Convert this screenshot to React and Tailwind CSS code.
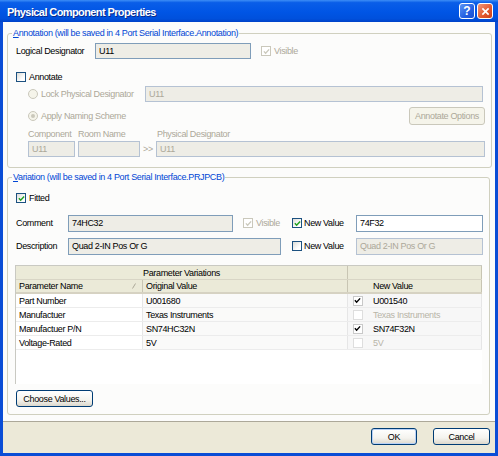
import React from "react";

function Check({ kind = "xp", checked = false }) {
  if (kind === "xp") {
    return (
      <span className="w-[10px] h-[10px] shrink-0 border border-[#1C5180] bg-[linear-gradient(135deg,#DCDCD7,#FFFFFF_70%)] flex items-center justify-center">
        {checked && (
          <svg viewBox="0 0 8 8" className="w-[7px] h-[7px]">
            <path d="M1 3.8 L3 6 L7 1.6" stroke="#21A121" strokeWidth="1.7" fill="none" />
          </svg>
        )}
      </span>
    );
  }
  if (kind === "disabled") {
    return (
      <span className="w-[10px] h-[10px] shrink-0 border border-[#CAC8BB] bg-white flex items-center justify-center">
        {checked && (
          <svg viewBox="0 0 8 8" className="w-[7px] h-[7px]">
            <path d="M1 3.8 L3 6 L7 1.6" stroke="#CAC8BB" strokeWidth="1.5" fill="none" />
          </svg>
        )}
      </span>
    );
  }
  if (kind === "grid") {
    return (
      <span className="w-[10px] h-[10px] shrink-0 border border-[#C9C9C9] bg-white flex items-center justify-center">
        {checked && (
          <svg viewBox="0 0 8 8" className="w-[7px] h-[7px]">
            <path d="M1 3.8 L3 6 L7 1.6" stroke="#000000" strokeWidth="1.6" fill="none" />
          </svg>
        )}
      </span>
    );
  }
  return (
    <span className="w-[10px] h-[10px] shrink-0 border border-[#DEDEDE] bg-white" />
  );
}

function Radio({ selected }) {
  return (
    <span className="w-[10px] h-[10px] shrink-0 rounded-full border border-[#CAC8BB] bg-[#F5F4EA] flex items-center justify-center">
      {selected && <span className="w-[4px] h-[4px] rounded-full bg-[#CAC8BB]" />}
    </span>
  );
}

function XPButton({ className, children, isDefault }) {
  return (
    <div
      className={
        "h-[17px] rounded-[3px] border border-[#003C74] bg-[linear-gradient(to_bottom,#FFFFFF,#F4F3EE_60%,#DCD8CC)] flex items-center justify-center text-black " +
        (isDefault ? "shadow-[inset_0_0_0_1px_#B9D1F6] " : "") +
        className
      }
    >
      {children}
    </div>
  );
}

export default function App() {
  return (
    <div className="w-[498px] h-[456px] flex flex-col font-['Liberation_Sans',Arial,sans-serif] text-[9px] tracking-[-0.35px] text-black leading-[12px] overflow-hidden">
      {/* Title bar */}
      <div className="h-[22px] shrink-0 flex items-center pl-[7px] pr-[5px] bg-[linear-gradient(to_bottom,#3D8EF6,#0A5EE8_12%,#0055E5_55%,#0050DC_85%,#0042C8)]">
        <span className="text-white font-bold text-[11px] tracking-[-0.6px] pt-[1px] flex-1 [text-shadow:1px_1px_0_#0A2A8A]">
          Physical Component Properties
        </span>
        <div className="flex gap-[2px] items-center">
          <div className="w-[16px] h-[16px] rounded-[3px] border border-white bg-[linear-gradient(135deg,#5E95F5,#2360E2_60%,#1A4FD0)] flex items-center justify-center text-white font-bold text-[12px] tracking-normal leading-none">
            ?
          </div>
          <div className="w-[16px] h-[16px] rounded-[3px] border border-white bg-[linear-gradient(135deg,#F0977A,#E2572D_60%,#C8401C)] flex items-center justify-center">
            <svg viewBox="0 0 10 10" className="w-[9px] h-[9px]">
              <path d="M1.5 1.5 L8.5 8.5 M8.5 1.5 L1.5 8.5" stroke="white" strokeWidth="1.8" />
            </svg>
          </div>
        </div>
      </div>

      {/* Frame */}
      <div className="flex-1 flex flex-col border-x-[3px] border-b-[3px] border-[#0A4DD6]">
        {/* White panel */}
        <div className="flex-1 bg-[#FCFCFB] flex flex-col pl-[4px] pr-[5px]">
          {/* Annotation */}
          <fieldset className="mt-[5px] border border-[#D0D0BF] rounded-[3px] pl-[4px] pr-[6px] pb-[10px]">
            <legend className="px-[1px] text-[#0046D5] leading-[12px]">
              <span className="underline">A</span>nnotation (will be saved in 4 Port Serial Interface.Annotation)
            </legend>
            <div className="pl-[4px] flex flex-col">
              <div className="mt-[3px] h-[18px] flex items-center">
                <span className="w-[79px]">Logical Designator</span>
                <div className="w-[156px] h-[16px] border border-[#7F9DB9] bg-[#EEEDE6] px-[3px] flex items-center">U11</div>
                <span className="ml-[10px] flex items-center gap-[3px] text-[#ACA899]">
                  <Check kind="disabled" checked />
                  Visible
                </span>
              </div>
              <div className="mt-[10px] h-[14px] flex items-center gap-[3px]">
                <Check kind="xp" />
                <span>Annotate</span>
              </div>
              <div className="mt-[2px] h-[16px] flex items-center">
                <div className="w-[129px] pl-[12px] flex items-center gap-[3px] text-[#ACA899]">
                  <Radio />
                  <span>Lock Physical Designator</span>
                </div>
                <div className="w-[338px] h-[16px] border border-[#B5C2D3] bg-[#EEEDE6] px-[3px] flex items-center text-[#ACA899]">U11</div>
              </div>
              <div className="mt-[5px] h-[18px] flex items-center">
                <div className="flex-1 pl-[12px] flex items-center gap-[3px] text-[#ACA899]">
                  <Radio selected />
                  <span>Apply Naming Scheme</span>
                </div>
                <div className="w-[76px] h-[18px] rounded-[3px] border border-[#CAC8BB] bg-[#F5F4EA] flex items-center justify-center text-[#ACA899]">
                  Annotate Options
                </div>
              </div>
              <div className="mt-[3px] h-[12px] flex items-center pl-[12px] text-[#ACA899]">
                <span className="w-[50px]">Component</span>
                <span className="w-[79px]">Room Name</span>
                <span>Physical Designator</span>
              </div>
              <div className="mt-[1px] h-[16px] flex items-center pl-[12px]">
                <div className="w-[47px] h-[16px] border border-[#B5C2D3] bg-[#EEEDE6] px-[3px] flex items-center text-[#ACA899]">U11</div>
                <div className="ml-[3px] w-[62px] h-[16px] border border-[#B5C2D3] bg-[#EEEDE6]" />
                <span className="w-[16px] text-center text-[#ACA899]">&gt;&gt;</span>
                <div className="w-[329px] h-[16px] border border-[#B5C2D3] bg-[#EEEDE6] px-[3px] flex items-center text-[#ACA899]">U11</div>
              </div>
            </div>
          </fieldset>

          {/* Variation */}
          <fieldset className="mt-[3px] border border-[#D0D0BF] rounded-[3px] pl-[4px] pr-[6px] pb-[7px]">
            <legend className="px-[1px] text-[#0046D5] leading-[12px]">
              <span className="underline">V</span>ariation (will be saved in 4 Port Serial Interface.PRJPCB)
            </legend>
            <div className="pl-[4px] flex flex-col">
              <div className="mt-[8px] h-[14px] flex items-center gap-[3px]">
                <Check kind="xp" checked />
                <span>Fitted</span>
              </div>
              <div className="mt-[9px] h-[18px] flex items-center">
                <span className="w-[52px]">Comment</span>
                <div className="w-[165px] h-[17px] border border-[#7F9DB9] bg-[#EEEDE6] px-[3px] flex items-center">74HC32</div>
                <span className="ml-[10px] w-[49px] flex items-center gap-[3px] text-[#ACA899]">
                  <Check kind="disabled" checked />
                  Visible
                </span>
                <span className="w-[64px] flex items-center gap-[2px]">
                  <Check kind="xp" checked />
                  New Value
                </span>
                <div className="w-[127px] h-[17px] border border-[#7F9DB9] bg-white px-[3px] flex items-center">74F32</div>
              </div>
              <div className="mt-[5px] h-[18px] flex items-center">
                <span className="w-[52px]">Description</span>
                <div className="w-[213px] h-[17px] border border-[#7F9DB9] bg-[#EEEDE6] px-[3px] flex items-center">Quad 2-IN Pos Or G</div>
                <span className="ml-[11px] w-[64px] flex items-center gap-[2px]">
                  <Check kind="xp" />
                  New Value
                </span>
                <div className="w-[127px] h-[17px] border border-[#B5C2D3] bg-[#EEEDE6] px-[3px] flex items-center text-[#ACA899]">Quad 2-IN Pos Or G</div>
              </div>

              {/* Table */}
              <div className="mt-[10px] -ml-[1px] w-[467px] h-[119px] border-l border-t border-[#C9C9C2] bg-white flex flex-col">
                <div className="h-[14px] flex bg-[#EBEAD8] border-b border-[#D8D5C5]">
                  <div className="w-[332px] border-r border-[#C8C5B3] flex items-center justify-center">Parameter Variations</div>
                  <div className="flex-1 border-r border-[#C8C5B3]" />
                </div>
                <div className="h-[14px] flex bg-[#EBEAD8] border-b-2 border-[#D6D2C2]">
                  <div className="w-[127px] border-r border-[#C8C5B3] flex items-center pl-[3px] pr-[6px]">
                    <span className="flex-1">Parameter Name</span>
                    <svg viewBox="0 0 4 6" className="w-[4px] h-[6px]">
                      <path d="M0.5 5.5 L3.5 0.5" stroke="#ACA899" strokeWidth="1" />
                    </svg>
                  </div>
                  <div className="w-[205px] border-r border-[#C8C5B3] flex items-center pl-[3px]">Original Value</div>
                  <div className="w-[18px]" />
                  <div className="flex-1 border-r border-[#C8C5B3] flex items-center pl-[7px]">New Value</div>
                </div>
                {[
                  ["Part Number", "U001680", true, "U001540"],
                  ["Manufactuer", "Texas Instruments", false, "Texas Instruments"],
                  ["Manufactuer P/N", "SN74HC32N", true, "SN74F32N"],
                  ["Voltage-Rated", "5V", false, "5V"],
                ].map(([name, orig, on, nv]) => (
                  <div key={name} className="h-[14px] flex border-b border-[#ECECEC]">
                    <div className="w-[127px] border-r border-[#E6E6E6] bg-white flex items-center pl-[3px]">{name}</div>
                    <div className="w-[205px] border-r border-[#E6E6E6] bg-[#FAFAF9] flex items-center pl-[3px]">{orig}</div>
                    <div className="w-[18px] bg-[#F7F7F7] flex items-center justify-center pl-[1px]">
                      <Check kind={on ? "grid" : "off"} checked={on} />
                    </div>
                    <div className={"flex-1 border-r border-[#E6E6E6] bg-[#F7F7F7] flex items-center pl-[7px] " + (on ? "text-black" : "text-[#B8B5A8]")}>
                      {nv}
                    </div>
                  </div>
                ))}
              </div>

              <div className="mt-[6px]">
                <XPButton className="w-[77px]">Choose Values...</XPButton>
              </div>
            </div>
          </fieldset>
        </div>

        {/* Footer */}
        <div className="h-[32px] shrink-0 bg-[#ECE9D8] border-t border-[#ACA899] flex items-start justify-end pt-[6px] pr-[5px]">
          <XPButton className="w-[46px]" isDefault>OK</XPButton>
          <XPButton className="ml-[16px] w-[57px]">Cancel</XPButton>
        </div>
      </div>
    </div>
  );
}
